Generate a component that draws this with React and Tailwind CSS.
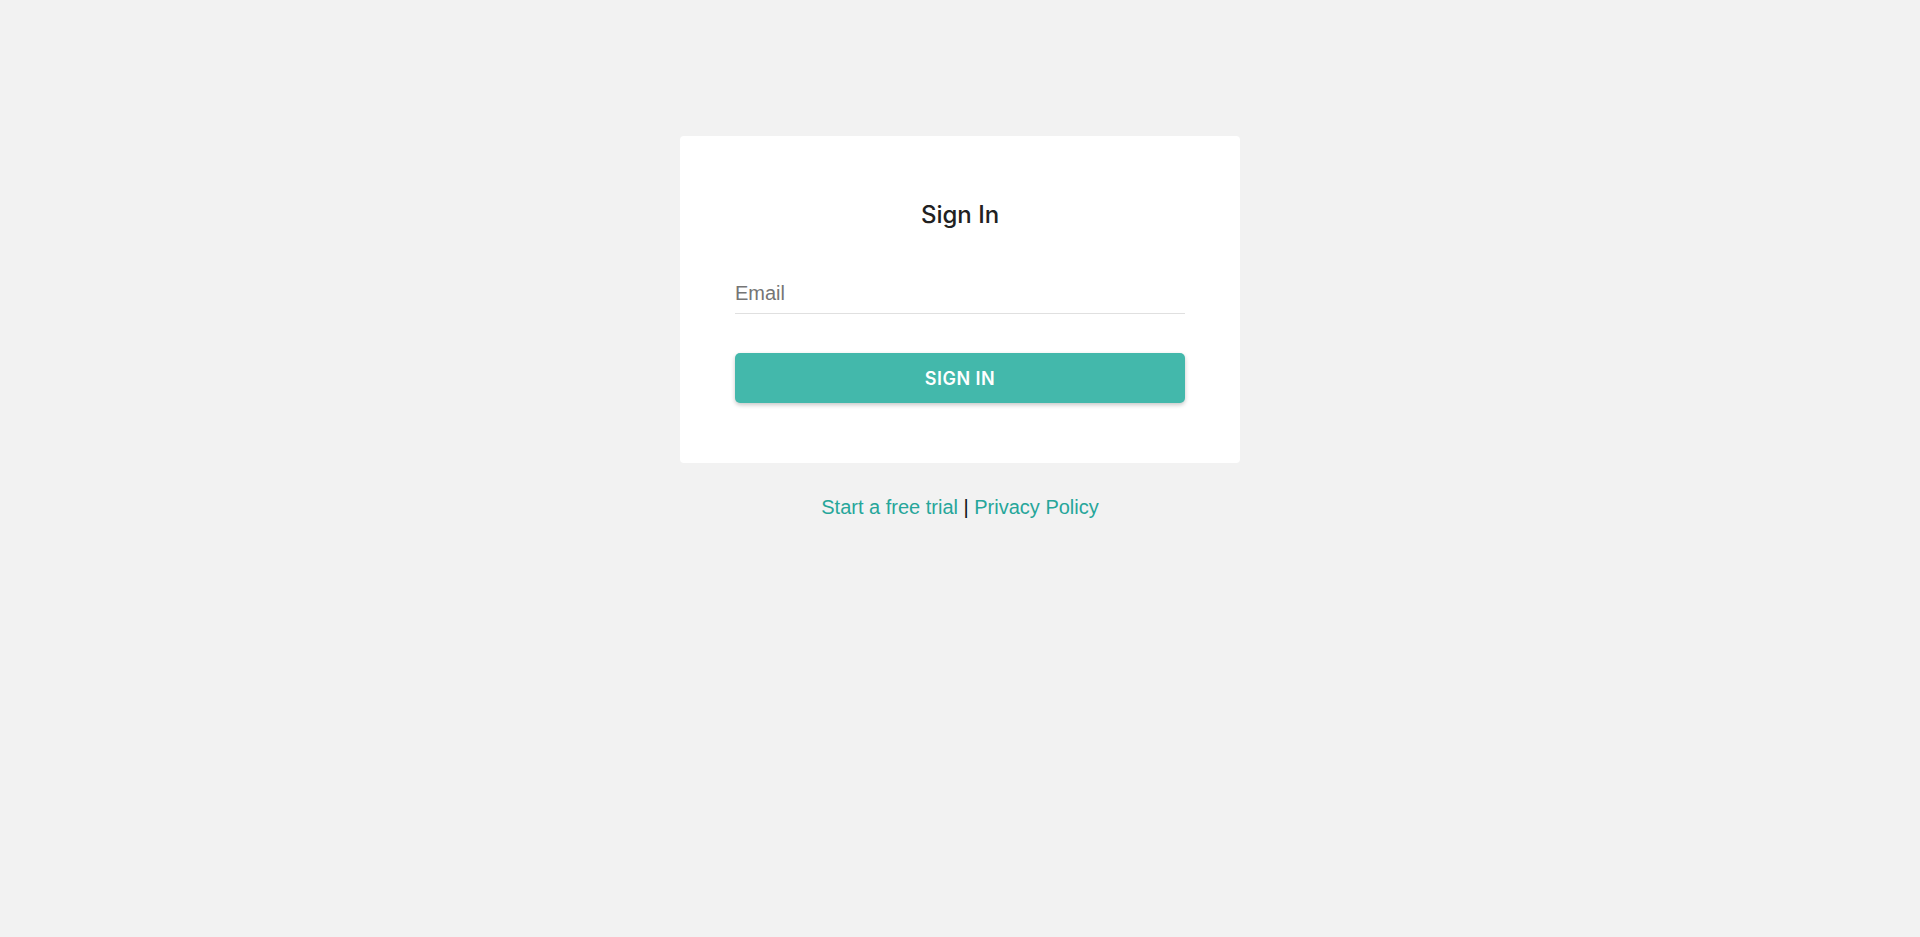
import { useState } from "react";

const SignIn = () => {
  const [email, setEmail] = useState("");

  return (
    <div className="min-h-screen w-full bg-[#f2f2f2] flex flex-col items-center pt-[136px]">
      <form
        onSubmit={(e) => e.preventDefault()}
        className="w-[560px] bg-white rounded-[4px] px-[55px] pt-[63px] pb-[60px]"
      >
        <h2 className="text-center text-[24px] leading-[32px] font-medium text-[#212121] font-['Inter',sans-serif]">
          Sign In
        </h2>

        {/* Email */}
        <input
          type="email"
          value={email}
          onChange={(e) => setEmail(e.target.value)}
          placeholder="Email"
          className="mt-[42px] block w-full h-[41px] pt-[1px] border-b border-[#e0e0e0] text-[20px] text-[#212121] placeholder:text-[#757575] font-['Liberation_Sans',Arial,sans-serif] focus:outline-none"
        />

        {/* Submit */}
        <button
          type="submit"
          className="mt-[39px] w-full h-[50px] rounded-[5px] bg-[#43b8ab] text-white text-[18px] font-semibold tracking-[0.5px] uppercase font-['Inter',sans-serif] shadow-[0_2px_4px_rgba(0,0,0,0.22)]"
        >
          Sign In
        </button>
      </form>

      <div className="mt-[32px] text-[20px] leading-[24px] font-['Liberation_Sans',Arial,sans-serif] text-[#111]">
        <a href="#" className="text-[#26a69a]">
          Start a free trial
        </a>{" "}
        |{" "}
        <a href="#" className="text-[#26a69a]">
          Privacy Policy
        </a>
      </div>
    </div>
  );
};

export default function App() {
  return <SignIn />;
}
